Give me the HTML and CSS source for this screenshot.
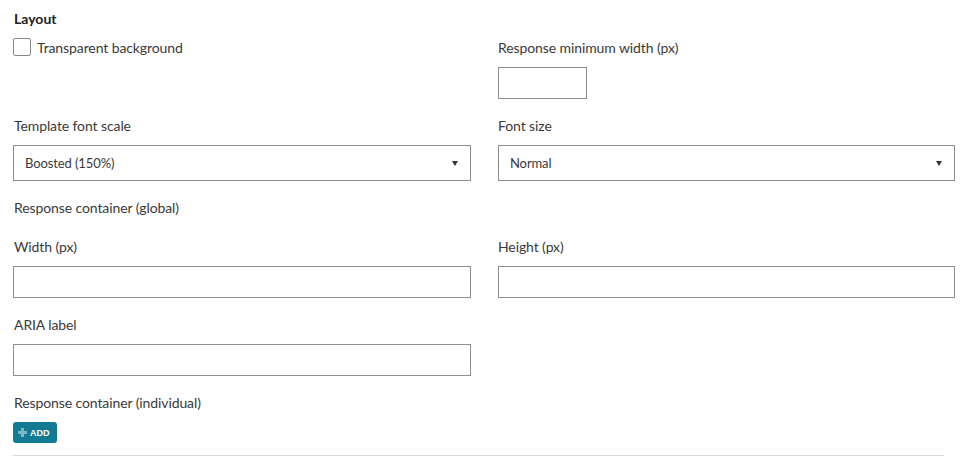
FILE: index.html
```html
<!DOCTYPE html>
<html lang="en">
<head>
<meta charset="utf-8">
<title>Layout</title>
<link rel="stylesheet" href="styles.css">
</head>
<body>
<div class="panel">
  <h3 class="heading">Layout</h3>
  <div class="row row-first">
    <div class="col">
      <label class="check">
        <span class="checkbox"></span>
        <span>Transparent background</span>
      </label>
    </div>
    <div class="col col-right">
      <div class="label">Response minimum width (px)</div>
      <div class="input input-small"></div>
    </div>
  </div>
  <div class="row">
    <div class="col">
      <div class="label">Template font scale</div>
      <div class="select"><span>Boosted (150%)</span><span class="caret"></span></div>
    </div>
    <div class="col col-right">
      <div class="label">Font size</div>
      <div class="select"><span>Normal</span><span class="caret"></span></div>
    </div>
  </div>
  <div class="label section-label">Response container (global)</div>
  <div class="row">
    <div class="col">
      <div class="label">Width (px)</div>
      <div class="input"></div>
    </div>
    <div class="col col-right">
      <div class="label">Height (px)</div>
      <div class="input"></div>
    </div>
  </div>
  <div class="row">
    <div class="col">
      <div class="label">ARIA label</div>
      <div class="input"></div>
    </div>
  </div>
  <div class="label">Response container (individual)</div>
  <button class="add-btn" type="button">
    <svg class="plus" width="9" height="9" viewBox="0 0 9 9"><path d="M3 0h3v3h3v3H6v3H3V6H0V3h3z" fill="#7db8c8"/></svg>
    <span>ADD</span>
  </button>
  <div class="rule"></div>
</div>
</body>
</html>
```

FILE: styles.css
```css
html, body {
  margin: 0;
  padding: 0;
  background: #fff;
}
body {
  font-family: Lato, "Open Sans", sans-serif;
  color: #333;
  font-size: 14px;
}
.panel {
  padding: 9px 0 0 13px;
  width: 942px;
}
.heading {
  margin: 0 0 9px 1px;
  font-size: 14px;
  font-weight: 700;
  line-height: 20px;
  color: #222;
}
.row {
  display: grid;
  grid-template-columns: 458px 457px;
  column-gap: 27px;
  margin-bottom: 17px;
}
.col {
  min-width: 0;
}
.label {
  line-height: 20px;
  margin-bottom: 9px;
  padding-left: 1px;
  color: #3a3a3a;
  letter-spacing: -0.1px;
}
.col-right .label {
  padding-left: 0;
}
.section-label {
  margin-bottom: 19px;
}
.check {
  display: flex;
  align-items: center;
  gap: 6px;
  height: 20px;
  margin-top: -1px;
  color: #3a3a3a;
  letter-spacing: -0.1px;
}
.checkbox {
  width: 16px;
  height: 16px;
  border: 1px solid #8a8a8a;
  border-radius: 2px;
  background: #fff;
}
.input {
  box-sizing: border-box;
  height: 32px;
  border: 1px solid #8f8f8f;
  background: #fff;
}
.input-small {
  width: 89px;
}
.select {
  box-sizing: border-box;
  height: 36px;
  border: 1px solid #8f8f8f;
  display: flex;
  align-items: center;
  justify-content: space-between;
  padding: 0 12px 0 11px;
  font-size: 13px;
  letter-spacing: -0.1px;
  color: #3a3a3a;
}
.caret {
  width: 0;
  height: 0;
  border-left: 3.5px solid transparent;
  border-right: 3.5px solid transparent;
  border-top: 5px solid #333;
  margin-top: 1px;
}
.add-btn {
  display: flex;
  align-items: center;
  gap: 3px;
  height: 21px;
  width: 44px;
  padding: 0 0 0 5px;
  border: none;
  border-radius: 3px;
  background: #137a94;
  color: #fff;
  font-family: "Liberation Sans", Arial, sans-serif;
  font-size: 9px;
  font-weight: 700;
  margin-bottom: 12px;
}
.plus {
  display: block;
}
.rule {
  width: 931px;
  height: 1px;
  background: #d9d9d9;
}
```
